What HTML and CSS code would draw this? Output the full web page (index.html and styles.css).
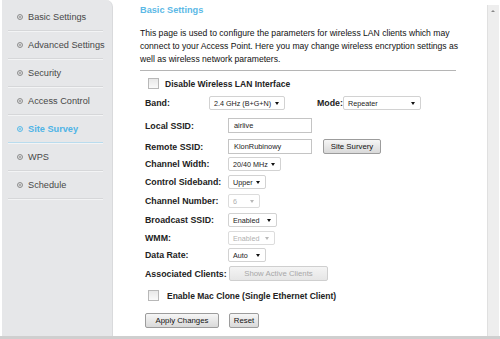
FILE: index.html
```html
<!DOCTYPE html>
<html lang="en">
<head>
    <meta charset="UTF-8">
    <title>Basic Settings</title>
    <link rel="stylesheet" href="styles.css">
</head>
<body>
    <div class="page">
        <div class="sidebar">
            <div class="menu-item"><span class="bullet"></span>Basic Settings</div>
            <div class="menu-item"><span class="bullet"></span>Advanced Settings</div>
            <div class="menu-item"><span class="bullet"></span>Security</div>
            <div class="menu-item"><span class="bullet"></span>Access Control</div>
            <div class="menu-item active"><span class="bullet"></span>Site Survey</div>
            <div class="menu-item"><span class="bullet"></span>WPS</div>
            <div class="menu-item"><span class="bullet"></span>Schedule</div>
        </div>

        <div class="content">
            <h3 class="title">Basic Settings</h3>
            <p class="intro">This page is used to configure the parameters for wireless LAN clients which may connect to your Access Point. Here you may change wireless encryption settings as well as wireless network parameters.</p>
            <div class="divider"></div>

            <div class="check-row">
                <span class="checkbox"></span>
                <span class="check-label">Disable Wireless LAN Interface</span>
            </div>

            <div class="row band-row">
                <span class="label label-short">Band:</span>
                <span class="select w-band">2.4 GHz (B+G+N)<span class="caret"></span></span>
                <span class="label mode-label">Mode:</span>
                <span class="select w-mode">Repeater<span class="caret"></span></span>
            </div>
            <div class="row mt6">
                <span class="label">Local SSID:</span>
                <span class="textbox">airlive</span>
            </div>
            <div class="row mt4">
                <span class="label">Remote SSID:</span>
                <span class="textbox">KlonRubinowy</span>
                <span class="btn btn-survey">Site Survery</span>
            </div>
            <div class="row">
                <span class="label">Channel Width:</span>
                <span class="select w-cw">20/40 MHz<span class="caret"></span></span>
            </div>
            <div class="row mt1">
                <span class="label">Control Sideband:</span>
                <span class="select w-cs">Upper<span class="caret"></span></span>
            </div>
            <div class="row mt2">
                <span class="label">Channel Number:</span>
                <span class="select w-cn disabled">6<span class="caret"></span></span>
            </div>
            <div class="row mt2">
                <span class="label">Broadcast SSID:</span>
                <span class="select w-bs">Enabled<span class="caret"></span></span>
            </div>
            <div class="row mt1">
                <span class="label">WMM:</span>
                <span class="select w-wmm disabled">Enabled<span class="caret"></span></span>
            </div>
            <div class="row">
                <span class="label">Data Rate:</span>
                <span class="select w-dr">Auto<span class="caret"></span></span>
            </div>
            <div class="row mt2">
                <span class="label">Associated Clients:</span>
                <span class="btn btn-clients disabled">Show Active Clients</span>
            </div>

            <div class="check-row mac-row">
                <span class="checkbox"></span>
                <span class="check-label mac-label">Enable Mac Clone (Single Ethernet Client)</span>
            </div>

            <div class="row actions">
                <span class="btn btn-apply">Apply Changes</span>
                <span class="btn btn-reset">Reset</span>
            </div>
        </div>

        <div class="scrollbar">
            <span class="scroll-up"></span>
        </div>
    </div>
    <div class="bottom-line"></div>
</body>
</html>
```

FILE: styles.css
```css
body {
    margin: 0;
    background: #ffffff;
    font-family: "Liberation Sans", Arial, sans-serif;
    color: #1e1e1e;
    overflow: hidden;
}
.page {
    display: flex;
    height: 336px;
}
.sidebar {
    width: 111px;
    margin-left: 2px;
    background: #e6e7e9;
    border-right: 1px solid #d9dadc;
    border-top-right-radius: 7px;
    padding: 3px 9px 0 6px;
    box-sizing: border-box;
    flex-shrink: 0;
}
.menu-item {
    display: flex;
    align-items: center;
    height: 27px;
    border-bottom: 1px solid #d6d7d9;
    box-shadow: 0 1px 0 #f3f4f5;
    font-size: 9.2px;
    color: #484848;
    white-space: nowrap;
}
.menu-item.active {
    color: #4fb4e6;
    font-weight: bold;
    border-bottom-color: #b9dcee;
}
.bullet {
    flex-shrink: 0;
    width: 4px;
    height: 4px;
    border: 1px solid #8e8e8e;
    border-radius: 50%;
    margin: 0 5px 0 9px;
    box-shadow: inset 0 0 0 1px #e6e7e9, inset 0 0 0 2px #9a9a9a;
}
.active .bullet {
    border-color: #5bbbe8;
    box-shadow: inset 0 0 0 1px #e6e7e9, inset 0 0 0 2px #6cc2ea;
}
.content {
    flex-grow: 1;
    padding-left: 27px;
    font-size: 9px;
}
.title {
    margin: 4px 0 0 0;
    font-size: 9.2px;
    line-height: 12px;
    color: #5cb9e6;
    font-weight: bold;
}
.intro {
    margin: 11px 0 0 0;
    width: 322px;
    line-height: 13px;
    font-size: 8.6px;
    color: #111;
}
.divider {
    margin-top: 4px;
    width: 316px;
    height: 1px;
    background: #b5b5b5;
}
.check-row {
    display: flex;
    align-items: center;
    height: 17px;
    margin-top: 4px;
    padding-left: 8px;
}
.checkbox {
    flex-shrink: 0;
    width: 9px;
    height: 9px;
    border: 1px solid #b8b8b8;
    background: linear-gradient(#e8e8e8, #fafafa);
    margin-right: 6px;
}
.check-label {
    font-weight: bold;
    font-size: 8.5px;
    color: #222;
}
.mac-label {
    margin-left: 2px;
}
.mac-row {
    margin-top: 5px;
}
.row {
    display: flex;
    align-items: center;
    height: 17px;
    padding-left: 5px;
}
.band-row {
    margin-top: 2px;
}
.mt1 { margin-top: 1px; }
.mt2 { margin-top: 2px; }
.mt4 { margin-top: 4px; }
.mt6 { margin-top: 6px; }
.label {
    width: 83px;
    font-weight: bold;
    font-size: 8.8px;
    color: #222;
    flex-shrink: 0;
    white-space: nowrap;
}
.label-short {
    width: 64px;
}
.mode-label {
    width: 26px;
    margin: 0 0 0 32px;
}
.select {
    position: relative;
    flex-shrink: 0;
    height: 14px;
    line-height: 13px;
    border: 1px solid #d2d2d2;
    border-radius: 2px;
    background: #ffffff;
    padding-left: 4px;
    box-sizing: border-box;
    font-size: 7.2px;
    color: #222;
    white-space: nowrap;
}
.select.disabled {
    color: #b0b0b0;
    border-color: #dcdcdc;
}
.caret {
    position: absolute;
    right: 5px;
    top: 5px;
    border-left: 2.5px solid transparent;
    border-right: 2.5px solid transparent;
    border-top: 3px solid #111;
}
.disabled .caret {
    border-top-color: #b8b8b8;
}
.w-band { width: 76px; }
.w-mode { width: 78px; }
.w-cw { width: 53px; }
.w-cs { width: 38px; }
.w-cn { width: 32px; }
.w-bs { width: 49px; }
.w-wmm { width: 47px; }
.w-dr { width: 38px; }
.textbox {
    flex-shrink: 0;
    width: 84px;
    height: 15px;
    line-height: 13px;
    border: 1px solid #c4c4c4;
    padding-left: 5px;
    box-sizing: border-box;
    font-size: 7.4px;
    color: #222;
}
.btn {
    flex-shrink: 0;
    height: 15px;
    line-height: 13px;
    border: 1px solid #9c9c9c;
    border-radius: 2px;
    background: linear-gradient(#f6f6f6, #d9d9d9);
    box-sizing: border-box;
    text-align: center;
    font-size: 7.8px;
    color: #111;
    white-space: nowrap;
}
.btn.disabled {
    color: #a8a8a8;
    border-color: #cfcfcf;
    background: linear-gradient(#f4f4f4, #e6e6e6);
}
.btn-survey {
    width: 58px;
    margin-left: 11px;
}
.btn-clients {
    width: 99px;
    margin-left: 1px;
}
.actions {
    margin-top: 8px;
}
.btn-apply {
    width: 74px;
}
.btn-reset {
    width: 30px;
    margin-left: 10px;
}
.scrollbar {
    width: 11px;
    margin: 5px 1px 0 0;
    background: #eeeeee;
    border-left: 1px solid #e0e0e0;
    position: relative;
    flex-shrink: 0;
}
.scroll-up {
    position: absolute;
    left: 3px;
    top: 5px;
    border-left: 2px solid transparent;
    border-right: 2px solid transparent;
    border-bottom: 2px solid #888;
}
.bottom-line {
    height: 3px;
    background: #cfcfcf;
}
```
